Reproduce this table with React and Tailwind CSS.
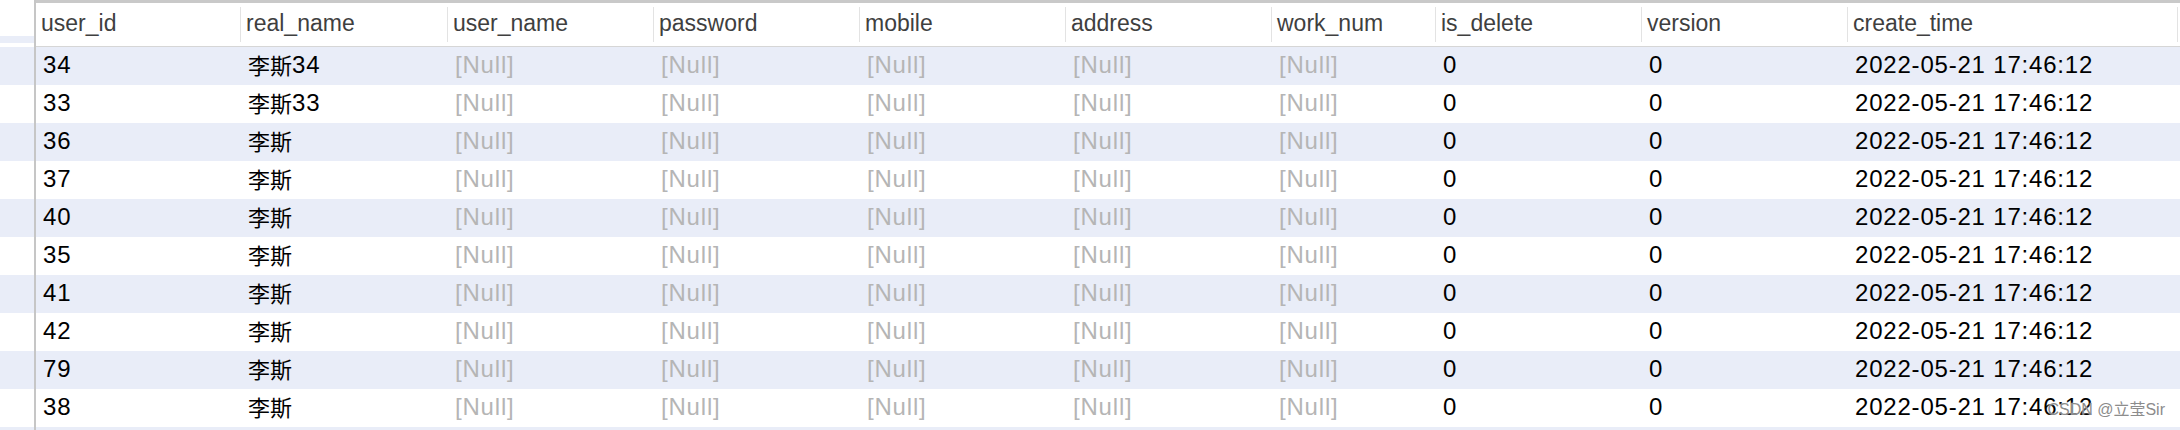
import React from "react";

const columns = [
  { key: "user_id", w: "w-[205px]" },
  { key: "real_name", w: "w-[207px]" },
  { key: "user_name", w: "w-[206px]" },
  { key: "password", w: "w-[206px]" },
  { key: "mobile", w: "w-[206px]" },
  { key: "address", w: "w-[206px]" },
  { key: "work_num", w: "w-[164px]" },
  { key: "is_delete", w: "w-[206px]" },
  { key: "version", w: "w-[206px]" },
  { key: "create_time", w: "w-[330px]" },
];

const ids = ["34", "33", "36", "37", "40", "35", "41", "42", "79", "38"];

const rows = ids.map((id, i) => ({
  user_id: id,
  real_name: i === 0 ? "34" : i === 1 ? "33" : "",
  is_delete: "0",
  version: "0",
  create_time: "2022-05-21 17:46:12",
}));

const Cell = ({ col, row }) => {
  if (!row) return <div className={`${col.w} shrink-0`} />;
  if (col.key === "real_name") {
    return (
      <div className={`${col.w} shrink-0 pl-[7px] pb-[3px] flex items-center text-black`}>
        <span className="text-[22px] font-['Noto_Sans_CJK_SC',sans-serif] tracking-normal">李斯</span>
        {row.real_name}
      </div>
    );
  }
  const value = row[col.key];
  if (value === undefined) {
    return (
      <div className={`${col.w} shrink-0 pl-[7px] pb-[3px] flex items-center text-[#b5b5b5]`}>
        [Null]
      </div>
    );
  }
  return (
    <div className={`${col.w} shrink-0 pl-[7px] pb-[3px] flex items-center text-black`}>
      {value}
    </div>
  );
};

export default function App() {
  const allRows = [...rows, null];
  return (
    <div className="relative flex h-[430px] w-[2180px] overflow-hidden bg-white font-['Liberation_Sans',Arial,sans-serif]">
      {/* left pane */}
      <div className="flex flex-col w-[34px] shrink-0">
        <div className="h-[36px] shrink-0 bg-white" />
        <div className="h-[7px] shrink-0 bg-[#e9edf8]" />
        <div className="h-[4px] shrink-0 bg-white" />
        {allRows.map((_, i) => (
          <div key={i} className={`h-[38px] shrink-0 ${i % 2 === 0 ? "bg-[#e9edf8]" : "bg-white"}`} />
        ))}
      </div>
      <div className="w-[2px] shrink-0 bg-[#c6c6c6]" />

      {/* table */}
      <div className="flex flex-col flex-1 min-w-0">
        <div className="flex h-[47px] shrink-0 border-t-[3px] border-[#c9c9c9] border-b border-b-[#d6d6d6] bg-white text-[23px] text-[#3f3f3f]">
          {columns.map((col) => (
            <div key={col.key} className={`${col.w} shrink-0 flex items-center justify-between pl-[5px]`}>
              <span className="pb-[2px]">{col.key}</span>
              <div className="w-px h-[35px] bg-[#e3e3e3]" />
            </div>
          ))}
        </div>
        {allRows.map((row, i) => (
          <div
            key={i}
            className={`flex h-[38px] shrink-0 text-[24px] tracking-[0.8px] ${i % 2 === 0 ? "bg-[#e9edf8]" : "bg-white"}`}
          >
            {columns.map((col) => (
              <Cell key={col.key} col={col} row={row} />
            ))}
          </div>
        ))}
      </div>

      <div className="absolute right-[15px] bottom-[8px] text-[16px] text-[#8c8c8c] font-['Liberation_Sans','Noto_Sans_CJK_SC',sans-serif] [text-shadow:0_0_2px_white]">
        CSDN @立莹Sir
      </div>
    </div>
  );
}
